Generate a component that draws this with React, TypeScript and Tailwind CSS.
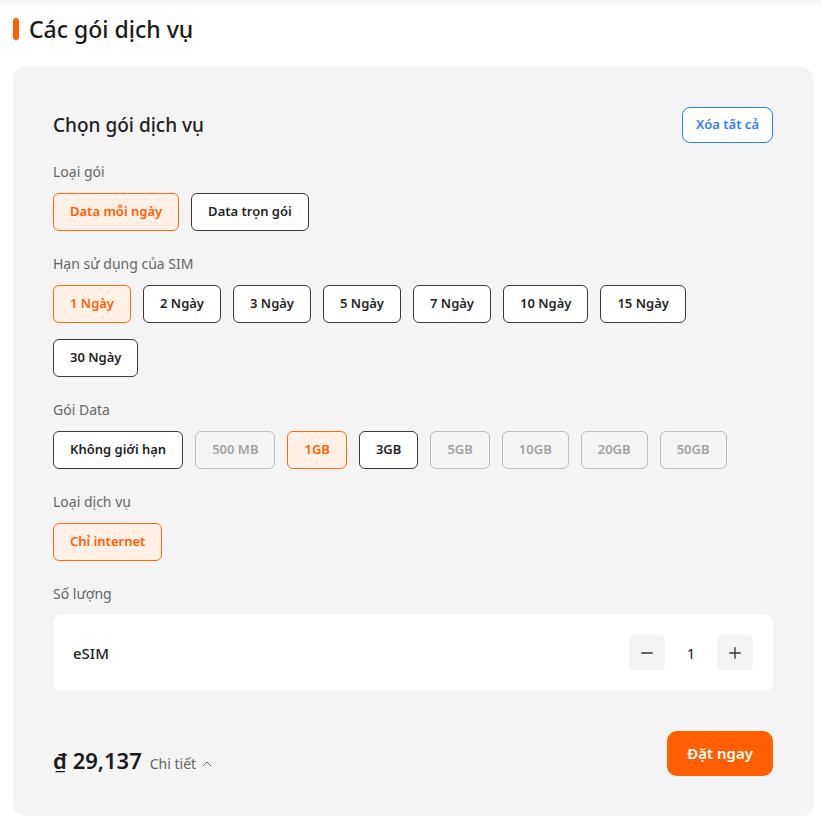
import { Minus, Plus, ChevronUp } from "lucide-react";

type Opt = { label: string; state?: "active" | "disabled" };

const packTypes: Opt[] = [{ label: "Data mỗi ngày", state: "active" }, { label: "Data trọn gói" }];
const days: Opt[] = [
  { label: "1 Ngày", state: "active" },
  { label: "2 Ngày" },
  { label: "3 Ngày" },
  { label: "5 Ngày" },
  { label: "7 Ngày" },
  { label: "10 Ngày" },
  { label: "15 Ngày" },
  { label: "30 Ngày" },
];
const data: Opt[] = [
  { label: "Không giới hạn" },
  { label: "500 MB", state: "disabled" },
  { label: "1GB", state: "active" },
  { label: "3GB" },
  { label: "5GB", state: "disabled" },
  { label: "10GB", state: "disabled" },
  { label: "20GB", state: "disabled" },
  { label: "50GB", state: "disabled" },
];
const services: Opt[] = [{ label: "Chỉ internet", state: "active" }];

export default function App() {
  return (
    <div className="bg-white text-[#1f1f1f]" style={{ fontFamily: '"Noto Sans", "Open Sans", sans-serif' }}>
      <div className="h-[6px] bg-gradient-to-b from-black/[0.05] to-transparent" />
      <div className="w-[813px] pl-[13px]">
        <div className="mt-[11px] flex items-center gap-[10px]">
          <span className="h-[22px] w-[6px] rounded-full bg-[#ff5f00]" />
          <h1 className="text-[23px] font-medium leading-[24px] text-[#1a1a1a]">Các gói dịch vụ</h1>
        </div>

        <div className="mt-[26px] rounded-[12px] bg-[#f4f4f4] p-[40px]">
          <div className="flex items-center justify-between">
            <h2 className="text-[19px] font-medium text-[#222]">Chọn gói dịch vụ</h2>
            <button className="h-[36px] rounded-[8px] border border-[#2f7cf6] bg-white px-[13px] text-[13px] font-semibold text-[#2f7cf6]">
              Xóa tất cả
            </button>
          </div>

          <Section title="Loại gói" opts={packTypes} className="mt-[19px]" />
          <Section title="Hạn sử dụng của SIM" opts={days} />
          <Section title="Gói Data" opts={data} />
          <Section title="Loại dịch vụ" opts={services} />

          <div className="mt-[23px]">
            <div className="text-[14px] leading-[20px] text-[#666]">Số lượng</div>
            <div className="mt-[11px] flex h-[76px] items-center justify-between rounded-[8px] bg-white px-[20px]">
              <span className="text-[15px] font-medium text-[#222]">eSIM</span>
              <div className="flex items-center">
                <button className="flex h-[36px] w-[36px] items-center justify-center rounded-[6px] bg-[#f4f4f4] text-[#333]">
                  <Minus className="h-[18px] w-[18px]" strokeWidth={1.8} />
                </button>
                <span className="w-[52px] text-center text-[15px] text-[#222]">1</span>
                <button className="flex h-[36px] w-[36px] items-center justify-center rounded-[6px] bg-[#f4f4f4] text-[#333]">
                  <Plus className="h-[18px] w-[18px]" strokeWidth={1.8} />
                </button>
              </div>
            </div>
          </div>

          <div className="mt-[40px] flex items-end justify-between">
            <div className="flex items-baseline gap-[8px] pb-[1px]">
              <span className="text-[22px] font-semibold leading-[30px] text-[#1a1a1a]">₫ 29,137</span>
              <span className="flex items-center gap-[3px] text-[14px] text-[#666]">
                Chi tiết <ChevronUp className="h-[16px] w-[16px]" strokeWidth={1.5} />
              </span>
            </div>
            <button className="h-[45px] rounded-[10px] bg-[#ff5f00] px-[20px] text-[15px] font-semibold text-white">
              Đặt ngay
            </button>
          </div>
        </div>
      </div>
    </div>
  );
}

function Section({ title, opts, className = "mt-[23px]" }: { title: string; opts: Opt[]; className?: string }) {
  return (
    <div className={className}>
      <div className="text-[14px] leading-[20px] text-[#666]">{title}</div>
      <div className="mt-[11px] flex flex-wrap gap-x-[12px] gap-y-[16px]">
        {opts.map((o) => (
          <Chip key={o.label} opt={o} />
        ))}
      </div>
    </div>
  );
}

function Chip({ opt }: { opt: Opt }) {
  const cls =
    opt.state === "active"
      ? "border-[#ff6a13] bg-[#fff0e6] text-[#ff5f00]"
      : opt.state === "disabled"
        ? "border-[#bdbdbd] bg-transparent text-[#a3a3a3]"
        : "border-[#3a3a3a] bg-white text-[#1f1f1f]";
  return (
    <button className={`h-[38px] rounded-[6px] border px-[16px] text-[13px] font-semibold ${cls}`}>{opt.label}</button>
  );
}
